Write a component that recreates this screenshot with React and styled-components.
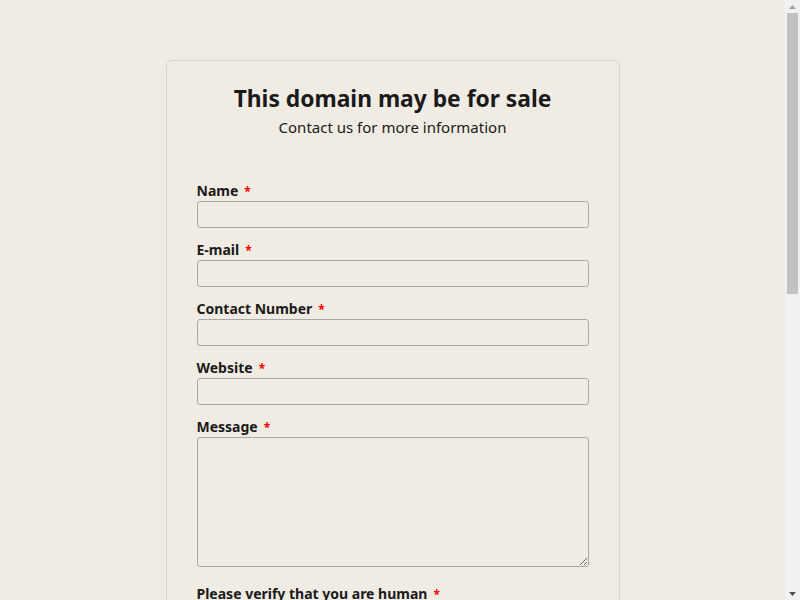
import React from 'react'
import styled, { createGlobalStyle } from 'styled-components'

const GlobalStyle = createGlobalStyle`
  html, body {
    margin: 0;
    padding: 0;
    background: #f0ece4;
  }
  body {
    font-family: "Noto Sans", "Open Sans", sans-serif;
    color: #1a1a1a;
  }
`

const Page = styled.div`
  padding: 60px 15px 40px 0;
  display: flex;
  justify-content: center;
`

const Card = styled.div`
  width: 392px;
  padding: 20px 30px 40px;
  border: 1px solid #d9d4cc;
  border-radius: 6px;
`

const Title = styled.h1`
  margin: 0;
  text-align: center;
  font-size: 22.8px;
  line-height: 36px;
  font-weight: 700;
  color: #1a1a1a;
`

const Subtitle = styled.p`
  margin: 0 0 43px;
  text-align: center;
  font-size: 15px;
  line-height: 21px;
`

const Field = styled.div`
  margin-top: ${p => p.$gap || 0}px;
  margin-bottom: 12px;
`

const Label = styled.label`
  display: block;
  font-size: 14px;
  font-weight: 700;
  line-height: 20px;
  span {
    color: #f00;
    margin-left: 6px;
    font-size: 12px;
    line-height: 0;
  }
`

const Input = styled.input`
  display: block;
  box-sizing: border-box;
  width: 100%;
  height: 27px;
  margin: 0;
  border: 1px solid #a9a9a9;
  border-radius: 3px;
  background: transparent;
`

const TextArea = styled.textarea`
  display: block;
  box-sizing: border-box;
  width: 100%;
  height: 130px;
  margin: 0;
  border: 1px solid #a9a9a9;
  border-radius: 3px;
  background: transparent;
`

const Captcha = styled.div`
  margin-top: 4px;
  width: 300px;
  height: 76px;
  box-sizing: border-box;
  border: 1px solid #d3d3d3;
  border-radius: 3px;
  background: #f9f9f9;
  display: flex;
  align-items: center;
  padding: 0 12px;
  gap: 12px;
  font-size: 14px;
`

const Box = styled.div`
  width: 26px;
  height: 26px;
  box-sizing: border-box;
  border: 2px solid #c1c1c1;
  border-radius: 2px;
  background: #fff;
`

const Submit = styled.button`
  margin-top: 30px;
  width: 100%;
  height: 44px;
  border: none;
  border-radius: 4px;
  background: #1a1a1a;
  color: #fff;
  font-family: inherit;
  font-size: 16px;
  font-weight: 700;
`

const Spacer = styled.div`
  height: 360px;
`

/* browser scrollbar drawn over the right edge */
const ScrollBar = styled.div`
  position: fixed;
  top: 0;
  right: 0;
  width: 15px;
  height: 100vh;
  background: #f1f1f1;
  display: flex;
  flex-direction: column;
  align-items: center;
`

const Arrow = styled.div`
  height: 13px;
  display: flex;
  align-items: center;
  justify-content: center;
`

const Track = styled.div`
  flex: 1;
  width: 100%;
  display: flex;
  justify-content: center;
`

const Thumb = styled.div`
  width: 11px;
  height: 281px;
  background: #c1c1c1;
`

const fields = ['Name', 'E-mail', 'Contact Number', 'Website']

export default function App() {
  return (
    <>
      <GlobalStyle />
      <Page>
        <Card>
          <Title>This domain may be for sale</Title>
          <Subtitle>Contact us for more information</Subtitle>
          {fields.map(f => (
            <Field key={f}>
              <Label>{f}<span>*</span></Label>
              <Input type="text" />
            </Field>
          ))}
          <Field>
            <Label>Message<span>*</span></Label>
            <TextArea />
          </Field>
          <Field $gap={17}>
            <Label>Please verify that you are human<span>*</span></Label>
            <Captcha><Box />I'm not a robot</Captcha>
          </Field>
          <Submit>Submit</Submit>
          <Spacer />
        </Card>
      </Page>
      <ScrollBar>
        <Arrow>
          <svg width="7" height="4" viewBox="0 0 7 4"><path d="M3.5 0L7 4H0z" fill="#a3a3a3" /></svg>
        </Arrow>
        <Track><Thumb /></Track>
        <Arrow>
          <svg width="7" height="4" viewBox="0 0 7 4"><path d="M0 0h7L3.5 4z" fill="#505050" /></svg>
        </Arrow>
      </ScrollBar>
    </>
  )
}
